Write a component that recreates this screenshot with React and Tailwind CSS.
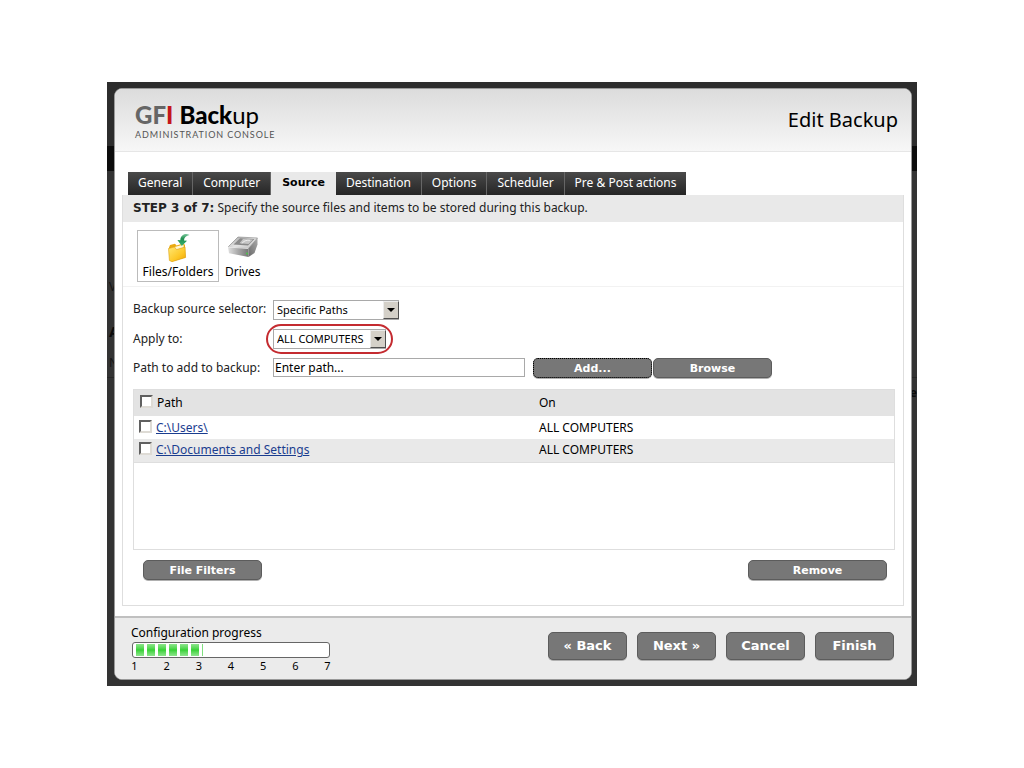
import React, { useState } from "react";

const tabs = ["General", "Computer", "Source", "Destination", "Options", "Scheduler", "Pre & Post actions"];
const rows = ["C:\\Users\\", "C:\\Documents and Settings"];
const steps = [1, 2, 3, 4, 5, 6, 7];

const buttonBase =
  "rounded-[5px] border border-[#5c5c5c] bg-[#777777] font-['DejaVu_Sans',sans-serif] font-bold text-white shadow-[0_1px_0_#b0b0b0]";
const smallButton = buttonBase + " h-5 pt-px text-[11px] leading-4";

function FolderIcon() {
  return (
    <svg width="24" height="30" viewBox="0 0 24 30" aria-hidden="true">
      <defs>
        <linearGradient id="folder" x1="0" y1="0" x2="1" y2="1">
          <stop offset="0" stopColor="#ffe873" />
          <stop offset="0.6" stopColor="#fdc828" />
          <stop offset="1" stopColor="#f0a400" />
        </linearGradient>
        <linearGradient id="arrow" x1="0" y1="0" x2="0" y2="1">
          <stop offset="0" stopColor="#7cc79c" />
          <stop offset="0.4" stopColor="#1f8f50" />
          <stop offset="1" stopColor="#3cb371" />
        </linearGradient>
      </defs>
      <path d="M3 14.500 4 12l5-1.200 1.500 1.700L17 10.500l2 1.200.4 12.800L6 28.500Z" fill="#e9aa10" />
      <path d="M5 15 17.500 11.500 18.500 22 6 27Z" fill="#fff6cf" />
      <path d="M2.500 15.500 8.500 14l2 2.600L19 14l.6 10.500L6 28.700 3.400 27.500Z" fill="url(#folder)" stroke="#dc9f10" strokeWidth="0.6" />
      <path d="M23.500 2C19-.5 14.600 2 14.300 7.200l-2.900-.3L15.800 13l5.200-5.200-3-.2C18 4.500 19.800 2.700 23.500 2Z" fill="url(#arrow)" />
    </svg>
  );
}

function DriveIcon() {
  return (
    <svg width="32" height="24" viewBox="0 0 32 24" aria-hidden="true">
      <defs>
        <linearGradient id="top" x1="0" y1="0" x2="1" y2="1">
          <stop offset="0" stopColor="#9a9a9a" />
          <stop offset="0.5" stopColor="#e4e4e4" />
          <stop offset="1" stopColor="#bdbdbd" />
        </linearGradient>
        <linearGradient id="front" x1="0" y1="0" x2="1" y2="0">
          <stop offset="0" stopColor="#e0e0e0" />
          <stop offset="0.5" stopColor="#a8a8a8" />
          <stop offset="1" stopColor="#757575" />
        </linearGradient>
        <linearGradient id="side" x1="0" y1="1" x2="1" y2="0">
          <stop offset="0" stopColor="#6a6a6a" />
          <stop offset="1" stopColor="#ababab" />
        </linearGradient>
      </defs>
      <path d="M11 3 30.500 4 21.500 14.500 1 13Z" fill="url(#top)" stroke="#808080" strokeWidth="0.6" />
      <path d="M13 4.300 27.500 5 21 11.500 6.500 10.500Z" fill="#8a8a8a" />
      <path d="M16 5 26 5.600 21.500 10 12.500 9.300Z" fill="#c6c6c6" />
      <path d="M15 9.500c1-2.500 5-3.700 8-3.200" stroke="#f2f2f2" strokeWidth="0.9" fill="none" />
      <path d="M1 13 21.500 14.500V23L2 19.200Z" fill="url(#front)" />
      <path d="M1 13 21.500 14.500" stroke="#fafafa" strokeWidth="0.7" />
      <path d="M21.500 14.500 30.500 4v6.500L27.500 19l-6 4Z" fill="url(#side)" />
      <circle cx="20" cy="19.500" r="0.900" fill="#43d043" />
    </svg>
  );
}

function Select({ id, options, className }) {
  return (
    <span className="relative inline-flex">
      <select
        id={id}
        className={"h-5 appearance-none rounded-none border border-[#a9a9a9] bg-white pl-[3px] text-[11px] leading-4 text-black outline-none " + className}
      >
        {options.map((o) => (
          <option key={o}>{o}</option>
        ))}
      </select>
      <span className="pointer-events-none absolute top-px right-0 bottom-px flex w-4 items-center justify-center border border-t-[#ececec] border-r-[#505050] border-b-[#505050] border-l-[#ececec] bg-[#d4d0c8]">
        <svg width="8" height="4" viewBox="0 0 8 4" aria-hidden="true">
          <path d="M0 0h8L4 4Z" fill="#000" />
        </svg>
      </span>
    </span>
  );
}

function Check({ label }) {
  return (
    <input
      type="checkbox"
      aria-label={label}
      className="block size-[13px] shrink-0 appearance-none border-2 border-t-[#606060] border-r-[#dedbd5] border-b-[#dedbd5] border-l-[#606060] bg-white checked:bg-[#606060]"
    />
  );
}

export default function App() {
  const [path, setPath] = useState("Enter path...");
  return (
    <div className="flex min-h-screen items-center justify-center bg-white font-['Noto_Sans','Open_Sans',sans-serif] text-[12px] leading-4 text-[#222]">
      <div className="relative w-full max-w-[810px] overflow-hidden bg-[#333333] pt-[6px] pr-[5px] pb-[6px] pl-[7px]">
        <div aria-hidden="true" className="absolute inset-x-0 top-0 h-16 bg-[#2d2d2d]" />
        <div aria-hidden="true" className="absolute inset-x-0 top-16 h-[25px] bg-[#0c0c0c]" />
        <div aria-hidden="true" className="absolute inset-x-0 top-[295px] h-px bg-[#262626]" />
        <div aria-hidden="true" className="absolute top-[197px] left-[2px] text-[#151515]">V</div>
        <div aria-hidden="true" className="absolute top-[241px] left-[2px] text-[15px] font-bold text-[#0a0a0a]">A</div>
        <div aria-hidden="true" className="absolute top-[273px] left-[2px] text-[#151515]">N</div>
        <div aria-hidden="true" className="absolute top-[303px] right-0 font-bold text-[#0a0a0a]">e</div>

        <main className="relative flex flex-col overflow-hidden rounded-lg border border-[#999] bg-white">
          <header className="flex h-[63px] items-center justify-between border-b border-[#e6e6e6] bg-linear-to-b from-[#dcdcdc] to-[#f7f7f7] pr-[13px] pb-px pl-5">
            <div className="font-[Lato,'Open_Sans',sans-serif]">
              <div className="text-[24px] leading-[29px] text-black">
                <b className="font-black text-[#666]">GF</b>
                <b className="font-black text-[#c4161c]">I</b> <b className="font-black">Back</b>up
              </div>
              <div className="text-[9px] leading-[11px] tracking-widest text-[#555]">ADMINISTRATION CONSOLE</div>
            </div>
            <h1 className="text-[20px] leading-6 text-black">Edit Backup</h1>
          </header>

          <div className="px-[7px] pt-5 pb-[10px]">
            <nav className="flex pl-[6px]">
              {tabs.map((t) =>
                t === "Source" ? (
                  <a key={t} href="#source" aria-current="page" className="h-[23px] bg-[#e9e9e9] px-[11px] font-['DejaVu_Sans',sans-serif] text-[11px] leading-[22px] font-bold text-black">
                    {t}
                  </a>
                ) : (
                  <a key={t} href="#tab" className="h-[23px] border-r border-[#666] bg-linear-to-b from-[#4a4a4a] to-[#262626] px-[10px] leading-[22px] text-white last:border-r-0">
                    {t}
                  </a>
                )
              )}
            </nav>

            <section className="border border-t-0 border-[#dedede]">
              <p className="h-[27px] bg-[#e9e9e9] px-[10px] leading-[26px]">
                <b className="font-['DejaVu_Sans',sans-serif]">STEP 3 of 7:</b> Specify the source files and items to be stored during this backup.
              </p>

              <div className="flex h-[65px] items-start gap-[6px] border-b border-[#f2f2f2] pt-2 pl-[14px] text-black">
                <button className="flex h-[52px] w-[82px] flex-col items-center justify-between border border-[#bbb] pt-[2px] pb-px whitespace-nowrap">
                  <FolderIcon />
                  <span>Files/Folders</span>
                </button>
                <button className="flex h-[52px] flex-col items-center justify-between pt-1 pb-[2px]">
                  <DriveIcon />
                  <span>Drives</span>
                </button>
              </div>

              <div className="pt-3 pr-2 pb-[25px] pl-[10px]">
                <div className="grid grid-cols-[140px_1fr] items-center">
                  <label htmlFor="selector" className="h-[30px] leading-5">Backup source selector:</label>
                  <div className="h-[30px] pt-px">
                    <Select id="selector" options={["Specific Paths"]} className="w-[126px]" />
                  </div>
                  <label htmlFor="apply" className="h-7 leading-5">Apply to:</label>
                  <div className="h-7">
                    <span className="relative inline-flex">
                      <Select id="apply" options={["ALL COMPUTERS"]} className="w-[113px]" />
                      <span aria-hidden="true" className="pointer-events-none absolute -inset-x-[7px] -inset-y-[5px] rounded-full border-2 border-[#c42b30]" />
                    </span>
                  </div>
                  <label htmlFor="path" className="leading-5">Path to add to backup:</label>
                  <div className="flex items-start pt-px">
                    <input
                      id="path"
                      value={path}
                      onChange={(e) => setPath(e.target.value)}
                      className="mr-2 h-[19px] w-[252px] border border-[#a9a9a9] bg-white px-px leading-4 text-black outline-none"
                    />
                    <button className={smallButton + " mr-px w-[119px] outline-1 -outline-offset-1 outline-dotted outline-black"}>Add...</button>
                    <button className={smallButton + " w-[119px]"}>Browse</button>
                  </div>
                </div>

                <div className="mt-[11px] h-[161px] border border-[#dedede]">
                  <table className="w-full table-fixed border-collapse text-left text-black">
                    <thead>
                      <tr className="h-[26px] bg-[#e3e3e3]">
                        <th className="w-[405px] p-0 pl-[6px] font-normal">
                          <div className="flex items-start gap-1">
                            <Check label="Select all paths" />
                            Path
                          </div>
                        </th>
                        <th className="p-0 font-normal">On</th>
                      </tr>
                    </thead>
                    <tbody>
                      {rows.map((r) => (
                        <tr key={r} className="h-[23px] even:border-b even:border-[#dedede] even:bg-[#e9e9e9]">
                          <td className="p-0 pl-[5px]">
                            <div className="flex items-start gap-1">
                              <Check label={r} />
                              <a href="#path" className="text-[#1a3d8f] underline">{r}</a>
                            </div>
                          </td>
                          <td className="p-0">ALL COMPUTERS</td>
                        </tr>
                      ))}
                    </tbody>
                  </table>
                </div>

                <div className="mt-[10px] flex justify-between pr-2 pl-[10px]">
                  <button className={smallButton + " w-[119px]"}>File Filters</button>
                  <button className={smallButton + " w-[139px]"}>Remove</button>
                </div>
              </div>
            </section>
          </div>

          <footer className="flex items-start justify-between border-t-2 border-[#c0c0c0] bg-[#ebebeb] pt-[7px] pr-[17px] pb-[5px] pl-4 text-black">
            <div>
              <div id="progress">Configuration progress</div>
              <div
                role="progressbar"
                aria-labelledby="progress"
                aria-valuemin={1}
                aria-valuemax={7}
                aria-valuenow={3}
                className="mt-px ml-px flex h-4 w-[198px] items-center gap-[3px] rounded-[3px] border border-[#666] bg-white pl-[3px]"
              >
                {[0, 1, 2, 3, 4, 5].map((n) => (
                  <span key={n} className="h-3 w-2 bg-linear-to-b from-[#8be58b] via-[#33d133] to-[#8be58b]" />
                ))}
                <span className="h-3 w-px bg-[#7fe07f]" />
              </div>
              <div className="flex w-[200px] justify-between text-[11px] leading-4">
                {steps.map((s) => (
                  <span key={s} className="w-[7px] text-center">{s}</span>
                ))}
              </div>
            </div>
            <div className="flex gap-[10px] pt-[7px]">
              {["« Back", "Next »", "Cancel", "Finish"].map((b) => (
                <button key={b} className={buttonBase + " h-7 w-[79px] text-[13px] leading-5"}>
                  {b}
                </button>
              ))}
            </div>
          </footer>
        </main>
      </div>
    </div>
  );
}
